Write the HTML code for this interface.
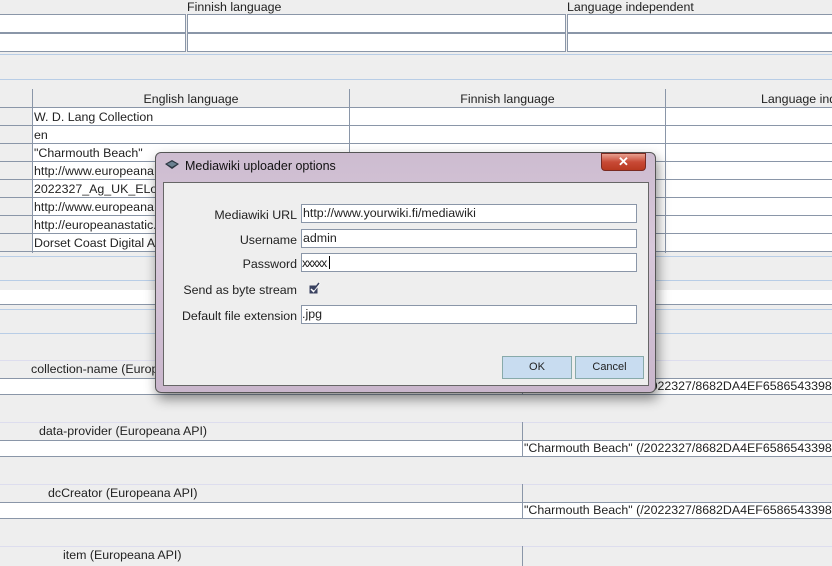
<!DOCTYPE html>
<html><head><style>
body{margin:0;width:832px;height:562px;overflow:hidden;background:#eeeeee;font-family:"Liberation Sans",sans-serif;font-size:12.4px;color:#222;position:relative}
.a{position:absolute;box-sizing:border-box}
.w{background:#fff;border:1px solid #8a96a8}
.hl{position:absolute;left:0;width:832px;height:1px;background:#b8cde6}
.t{position:absolute;white-space:nowrap;line-height:18px}
</style></head><body>
<div class="t" style="left:187px;top:-2px">Finnish language</div>
<div class="t" style="left:567px;top:-2px">Language independent</div>
<div class="a w" style="left:-2px;top:14px;width:188px;height:19px"></div>
<div class="a w" style="left:187px;top:14px;width:379px;height:19px"></div>
<div class="a w" style="left:567px;top:14px;width:270px;height:19px"></div>
<div class="a w" style="left:-2px;top:33px;width:188px;height:19px"></div>
<div class="a w" style="left:187px;top:33px;width:379px;height:19px"></div>
<div class="a w" style="left:567px;top:33px;width:270px;height:19px"></div>
<div class="hl" style="top:54px"></div>
<div class="hl" style="top:79px"></div>
<div class="a" style="left:32px;top:89px;width:1px;height:164px;background:#8a96a8"></div>
<div class="a" style="left:349px;top:89px;width:1px;height:164px;background:#8a96a8"></div>
<div class="a" style="left:665px;top:89px;width:1px;height:164px;background:#8a96a8"></div>
<div class="t" style="left:33px;width:316px;text-align:center;top:90px">English language</div>
<div class="t" style="left:350px;width:315px;text-align:center;top:90px">Finnish language</div>
<div class="t" style="left:761px;top:90px">Language ind</div>
<div class="a" style="left:0;top:107px;width:832px;height:1px;background:#8a96a8"></div>
<div class="a" style="left:33px;top:108px;width:799px;height:144px;background:#fff"></div>
<div class="a" style="left:349px;top:108px;width:1px;height:144px;background:#8a96a8"></div>
<div class="a" style="left:665px;top:108px;width:1px;height:144px;background:#8a96a8"></div>
<div class="a" style="left:0;top:125px;width:832px;height:1px;background:#8a96a8"></div>
<div class="a" style="left:0;top:143px;width:832px;height:1px;background:#8a96a8"></div>
<div class="a" style="left:0;top:161px;width:832px;height:1px;background:#8a96a8"></div>
<div class="a" style="left:0;top:179px;width:832px;height:1px;background:#8a96a8"></div>
<div class="a" style="left:0;top:197px;width:832px;height:1px;background:#8a96a8"></div>
<div class="a" style="left:0;top:215px;width:832px;height:1px;background:#8a96a8"></div>
<div class="a" style="left:0;top:233px;width:832px;height:1px;background:#8a96a8"></div>
<div class="a" style="left:0;top:251px;width:832px;height:1px;background:#8a96a8"></div>
<div class="t" style="left:34px;top:108px">W. D. Lang Collection</div>
<div class="t" style="left:34px;top:126px">en</div>
<div class="t" style="left:34px;top:144px">"Charmouth Beach"</div>
<div class="t" style="left:34px;top:162px">http://www.europeana.</div>
<div class="t" style="left:34px;top:180px">2022327_Ag_UK_ELo</div>
<div class="t" style="left:34px;top:198px">http://www.europeana.</div>
<div class="t" style="left:34px;top:216px">http://europeanastatic.</div>
<div class="t" style="left:34px;top:234px">Dorset Coast Digital Ar</div>
<div class="hl" style="top:256px"></div>
<div class="hl" style="top:280px"></div>
<div class="a" style="left:0;top:290px;width:832px;height:15px;background:#fff;border-bottom:1px solid #8a96a8"></div>
<div class="hl" style="top:309px"></div>
<div class="hl" style="top:333px"></div>
<div class="a" style="left:0;top:360px;width:832px;height:1px;background:#dde"></div>
<div class="t" style="left:31px;top:360px">collection-name (Europeana API)</div>
<div class="a" style="left:0;top:378px;width:832px;height:17px;background:#fff;border-top:1px solid #8a96a8;border-bottom:1px solid #8a96a8"></div>
<div class="a" style="left:522px;top:360px;width:1px;height:35px;background:#8a96a8"></div>
<div class="t" style="left:524px;top:377px">"Charmouth Beach" (/2022327/8682DA4EF6586543398</div>
<div class="a" style="left:0;top:422px;width:832px;height:1px;background:#dde"></div>
<div class="t" style="left:39px;top:422px">data-provider (Europeana API)</div>
<div class="a" style="left:0;top:440px;width:832px;height:17px;background:#fff;border-top:1px solid #8a96a8;border-bottom:1px solid #8a96a8"></div>
<div class="a" style="left:522px;top:422px;width:1px;height:35px;background:#8a96a8"></div>
<div class="t" style="left:524px;top:439px">"Charmouth Beach" (/2022327/8682DA4EF6586543398</div>
<div class="a" style="left:0;top:484px;width:832px;height:1px;background:#dde"></div>
<div class="t" style="left:48px;top:484px">dcCreator (Europeana API)</div>
<div class="a" style="left:0;top:502px;width:832px;height:17px;background:#fff;border-top:1px solid #8a96a8;border-bottom:1px solid #8a96a8"></div>
<div class="a" style="left:522px;top:484px;width:1px;height:35px;background:#8a96a8"></div>
<div class="t" style="left:524px;top:501px">"Charmouth Beach" (/2022327/8682DA4EF6586543398</div>
<div class="a" style="left:0;top:546px;width:832px;height:1px;background:#dde"></div>
<div class="t" style="left:63px;top:546px">item (Europeana API)</div>
<div class="a" style="left:522px;top:546px;width:1px;height:20px;background:#8a96a8"></div>
<div class="a" style="left:155px;top:152px;width:501px;height:241px;border:1px solid #555;border-radius:6px;background:linear-gradient(#cdbcd0,#d8c8da 40%,#c9b6cc);box-shadow:2px 6px 12px rgba(0,0,0,.45)"></div>
<svg class="a" style="left:164px;top:159px" width="16" height="12" viewBox="0 0 16 12"><path d="M1 5 L8 1 L15 5 L8 10 Z" fill="#2a3540"/><path d="M3 5 L8 2.5 L13 5 L8 8 Z" fill="#6a8090"/></svg>
<div class="t" style="left:185px;top:157px;font-size:12.5px;color:#111">Mediawiki uploader options</div>
<div class="a" style="left:601px;top:153px;width:45px;height:18px;border:1px solid #7a2a22;border-radius:0 0 4px 4px;background:linear-gradient(#e8a090,#c84a36 50%,#b83820)"></div>
<div class="t" style="left:601px;top:153px;width:45px;text-align:center;color:#fff;font-weight:bold;font-size:13px;line-height:18px">✕</div>
<div class="a" style="left:163px;top:182px;width:486px;height:204px;background:#eeeeee;border:1px solid #666"></div>
<div class="t" style="left:163px;width:134px;text-align:right;top:206px">Mediawiki URL</div>
<div class="t" style="left:163px;width:134px;text-align:right;top:231px">Username</div>
<div class="t" style="left:163px;width:134px;text-align:right;top:255px">Password</div>
<div class="t" style="left:163px;width:134px;text-align:right;top:281px">Send as byte stream</div>
<div class="t" style="left:163px;width:134px;text-align:right;top:307px">Default file extension</div>
<div class="a w" style="left:301px;top:204px;width:336px;height:19px"></div>
<div class="a w" style="left:301px;top:229px;width:336px;height:19px"></div>
<div class="a w" style="left:301px;top:253px;width:336px;height:19px"></div>
<div class="a w" style="left:301px;top:305px;width:336px;height:19px"></div>
<div class="t" style="left:303px;top:204px">http://www.yourwiki.fi/mediawiki</div>
<div class="t" style="left:303px;top:229px">admin</div>
<div class="t" style="left:302px;top:254px;font-size:12px;letter-spacing:-1.2px">xxxxx</div>
<div class="a" style="left:329px;top:256px;width:1px;height:13px;background:#000"></div>
<div class="t" style="left:302px;top:305px">.jpg</div>
<svg class="a" style="left:309px;top:282px" width="12" height="12" viewBox="0 0 12 12"><rect x="0.5" y="3.5" width="8" height="8" fill="#3a4260"/><path d="M2 7 L4.5 9.5 L11 1" stroke="#fff" stroke-width="1.5" fill="none"/><path d="M4.5 8 L10 1" stroke="#3a4260" stroke-width="1.5"/></svg>
<div class="a" style="left:502px;top:356px;width:70px;height:23px;border:1px solid #8aa;background:#c8dcf0"></div>
<div class="a" style="left:575px;top:356px;width:69px;height:23px;border:1px solid #8aa;background:#c8dcf0"></div>
<div class="t" style="left:502px;width:70px;text-align:center;top:358px;font-size:11px">OK</div>
<div class="t" style="left:575px;width:69px;text-align:center;top:358px;font-size:11px">Cancel</div>
</body></html>
